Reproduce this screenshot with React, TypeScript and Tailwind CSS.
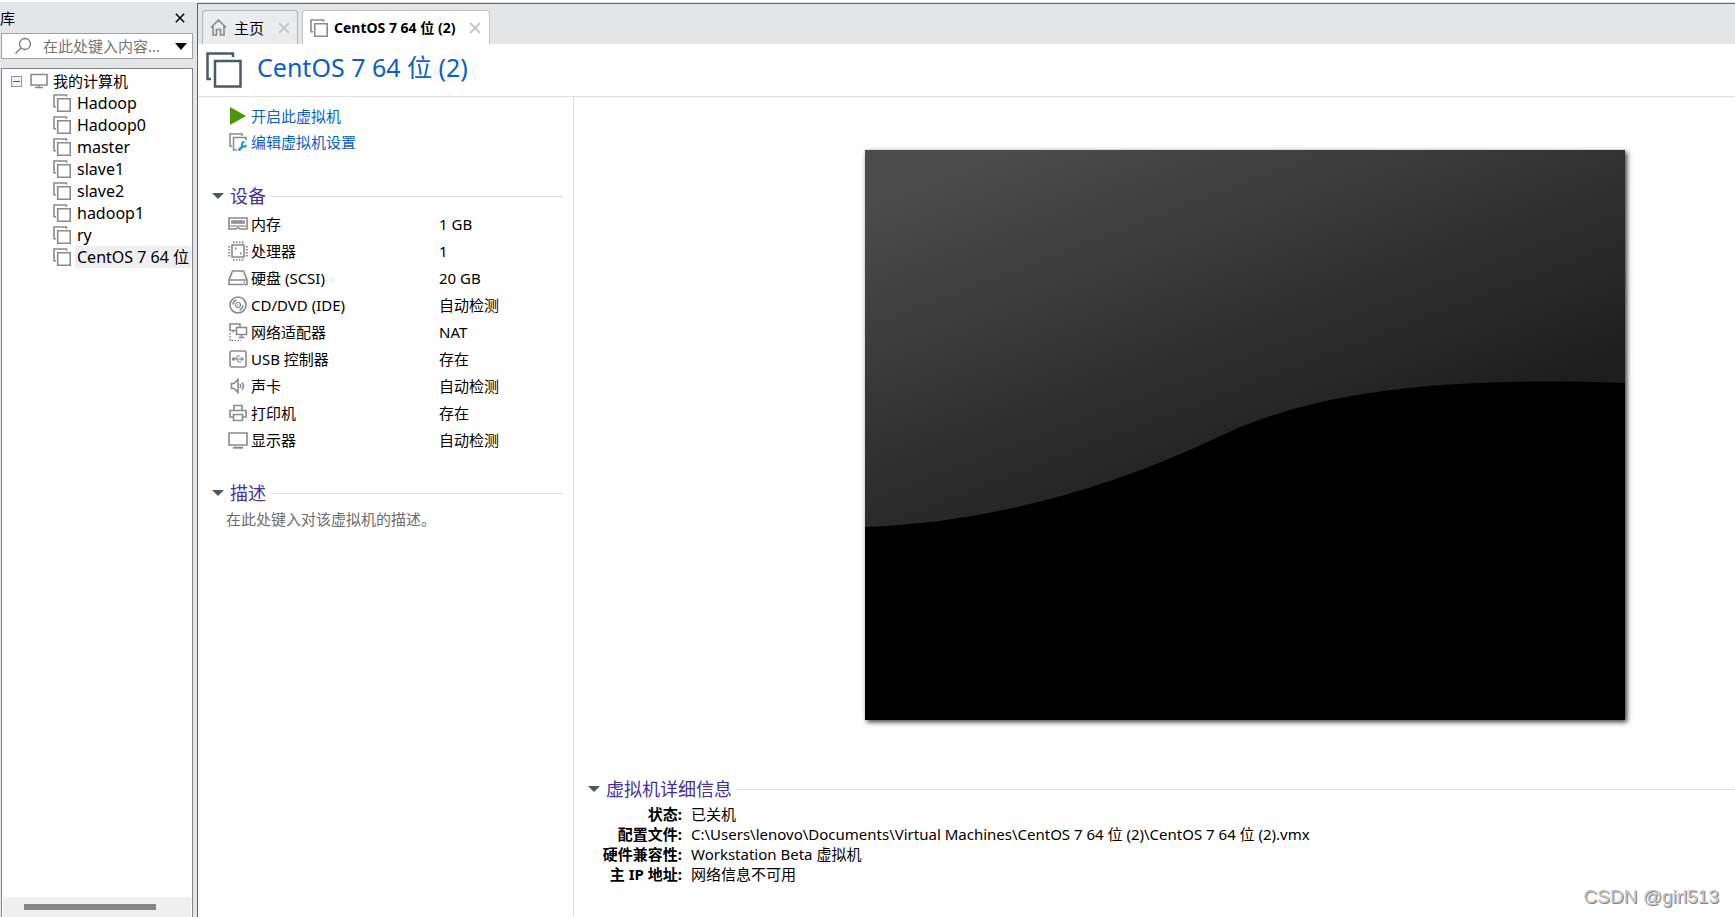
import type { ReactNode } from "react";

type IconProps = { className?: string };

function VmIcon({ className = "text-[#8a8a8a]" }: IconProps) {
  return (
    <svg width="18" height="18" viewBox="0 0 18 18" fill="none" stroke="currentColor" strokeWidth="1.6" className={`shrink-0 ${className}`}>
      <path d="M3 12.800H1V1h12.500v1.800" />
      <path d="M4.700 4.700h12.500v12.500H4.700z" />
    </svg>
  );
}

function MonitorIcon({ className = "" }: IconProps) {
  return (
    <svg width="18" height="16" viewBox="0 0 18 16" fill="none" stroke="#8a8a8a" strokeWidth="1.6" className={`shrink-0 ${className}`}>
      <path d="M1 1.500h16v10.500H1z" />
      <path d="M5 14.500h8M9 12v2" />
    </svg>
  );
}

function CloseIcon({ className = "" }: IconProps) {
  return (
    <svg width="12" height="12" viewBox="0 0 12 12" fill="none" stroke="currentColor" strokeWidth="1.8" className={className}>
      <path d="M1 1l10 10M11 1L1 11" />
    </svg>
  );
}

const deviceIcons: Record<string, ReactNode> = {
  memory: (
    <>
      <path d="M1 4h18v11H12l-1-1H9l-1 1H1z" />
      <path d="M4 7h3v2H4zM8.500 7h3v2h-3zM13 7h3v2h-3z" />
      <path d="M2 12h16" strokeWidth="1.200" />
    </>
  ),
  cpu: (
    <>
      <path d="M4 4h12v12H4z" />
      <path d="M5 1.200h11M5 18.800h11M1.200 5v11M18.800 5v11" strokeWidth="2" strokeDasharray="1.500 1.500" />
      <path d="M7 7.500h1.500M12 12.500h1.500" strokeWidth="1.800" />
    </>
  ),
  disk: (
    <>
      <path d="M4.500 3h11L19 12v4.500H1V12z" />
      <path d="M1 12h18M15.500 14.300H17" />
    </>
  ),
  disc: (
    <>
      <circle cx="10" cy="10" r="8" />
      <circle cx="10" cy="10" r="2.500" strokeWidth="1.200" />
      <path d="M10 9.500v1M5 9.500A5 5 0 0 1 8.500 5M15 10.500a5 5 0 0 1-3.500 4.500" />
    </>
  ),
  network: (
    <>
      <path d="M8 8.500H2V2h10v3" />
      <path d="M8.500 5.500h10v7h-10zM13.500 12.500v3M10.500 15.500h6M5 8.500v2" />
      <path d="M2 11v7.500h11" strokeDasharray="1.500 1.500" />
    </>
  ),
  usb: (
    <>
      <rect x="2" y="2" width="16" height="16" rx="2" />
      <path d="M5 10h9M7.500 10l2-3H12M8.500 10l2 3H13" strokeWidth="1.200" />
      <path d="M13 8.300l3 1.700-3 1.700z" fill="#8a8a8a" strokeWidth="0.500" />
      <circle cx="5.500" cy="10" r="1" />
    </>
  ),
  sound: (
    <>
      <path d="M3.500 7.500H6l4-4v13l-4-4H3.500z" />
      <path d="M12 8q1.500 2 0 4M14 6.500q3 3.500 0 7" />
    </>
  ),
  printer: (
    <>
      <path d="M6 7V2.500h8V7M5 14H2V7.500h16V14h-3" />
      <path d="M5.500 11.500h9v6h-9z" />
    </>
  ),
  display: (
    <>
      <path d="M1 3h18v12H1z" />
      <path d="M5 17.700h10" strokeWidth="2" />
    </>
  ),
};

const machines = ["Hadoop", "Hadoop0", "master", "slave1", "slave2", "hadoop1", "ry", "CentOS 7 64 位"];
const selectedMachine = "CentOS 7 64 位";

const devices = [
  { icon: "memory", name: "内存", value: "1 GB" },
  { icon: "cpu", name: "处理器", value: "1" },
  { icon: "disk", name: "硬盘 (SCSI)", value: "20 GB" },
  { icon: "disc", name: "CD/DVD (IDE)", value: "自动检测" },
  { icon: "network", name: "网络适配器", value: "NAT" },
  { icon: "usb", name: "USB 控制器", value: "存在" },
  { icon: "sound", name: "声卡", value: "自动检测" },
  { icon: "printer", name: "打印机", value: "存在" },
  { icon: "display", name: "显示器", value: "自动检测" },
];

const details = [
  { label: "状态:", value: "已关机" },
  { label: "配置文件:", value: "C:\\Users\\lenovo\\Documents\\Virtual Machines\\CentOS 7 64 位 (2)\\CentOS 7 64 位 (2).vmx" },
  { label: "硬件兼容性:", value: "Workstation Beta 虚拟机" },
  { label: "主 IP 地址:", value: "网络信息不可用" },
];

function SectionHeader({ title }: { title: string }) {
  return (
    <h2 className="flex h-6 items-center text-lg leading-6 text-[#45309f]">
      <button type="button" className="flex items-center gap-1.5">
        <svg width="12" height="6" viewBox="0 0 12 6" className="shrink-0">
          <path d="M0 0h12L6 6z" fill="#465a69" />
        </svg>
        {title}
      </button>
      <span className="ml-1 h-px flex-1 bg-[#dedfe0]" />
    </h2>
  );
}

function Sidebar() {
  return (
    <aside className="flex w-[197px] shrink-0 flex-col pr-1">
      <div className="flex h-[31px] items-center justify-between pr-2">
        <h2>库</h2>
        <button type="button" aria-label="关闭库">
          <CloseIcon className="size-[10px]" />
        </button>
      </div>
      <div className="ml-px flex h-[26px] shrink-0 items-center border border-[#a0a3a6] bg-white pr-[5px] pl-3">
        <svg width="18" height="18" viewBox="0 0 18 18" fill="none" stroke="#777" strokeWidth="1.3" className="shrink-0">
          <circle cx="11" cy="7" r="5.500" />
          <path d="M7 11l-5.500 5.500" />
        </svg>
        <input
          type="text"
          aria-label="搜索"
          placeholder="在此处键入内容..."
          className="ml-[11px] min-w-0 flex-1 outline-none placeholder:text-[#747474]"
        />
        <button type="button" aria-label="搜索选项">
          <svg width="12" height="7" viewBox="0 0 12 7">
            <path d="M0 0h12L6 7z" />
          </svg>
        </button>
      </div>
      <div className="mt-[9px] ml-px flex flex-1 flex-col overflow-hidden border border-b-0 border-[#828790] bg-white">
        <div className="mt-px flex h-[22px] items-center pl-[9px]">
          <button type="button" aria-label="折叠" className="flex size-[11px] items-center justify-center border border-[#959595] bg-[#f4f4f4]">
            <span className="h-px w-[7px] bg-[#3c56a6]" />
          </button>
          <MonitorIcon className="ml-2" />
          <span className="ml-[5px]">我的计算机</span>
        </div>
        <ul>
          {machines.map((name) => (
            <li key={name} className="flex h-[22px] items-center pr-px pl-[51px]">
              <VmIcon />
              <button
                type="button"
                className={`ml-1 h-[22px] pl-0.5 text-left text-base leading-[22px] whitespace-nowrap ${name === selectedMachine ? "flex-1 bg-[#efefef]" : ""}`}
              >
                {name}
              </button>
            </li>
          ))}
        </ul>
        <div className="mx-px mt-auto flex h-5 items-center bg-[#efefef]">
          <div className="ml-[21px] h-1.5 w-[132px] bg-[#868686]" />
        </div>
      </div>
    </aside>
  );
}

function TabBar() {
  return (
    <div className="flex h-10 items-end gap-1 pl-1" role="tablist">
      <div className="flex h-[34px] w-24 items-center rounded-t border border-b-0 border-[#b0b2b4] bg-[#ebecee] pl-[7px]">
        <button type="button" role="tab" aria-selected="false" className="flex items-center gap-[7px]">
          <svg width="17" height="17" viewBox="0 0 17 17" fill="none" stroke="#8a8a8a" strokeWidth="1.600">
            <path d="M1 8.500L8.500 1 16 8.500M3 7v9h3.500v-5.500h4V16H14V7" />
          </svg>
          主页
        </button>
        <button type="button" aria-label="关闭主页" className="ml-3.5 text-[#c6c6c6]">
          <CloseIcon />
        </button>
      </div>
      <div className="flex h-[34px] items-center rounded-t border border-b-0 border-[#c0c2c4] bg-white pr-2 pl-[7px]">
        <button type="button" role="tab" aria-selected="true" className="flex items-center gap-1.5 text-sm font-bold">
          <VmIcon />
          CentOS 7 64 位 (2)
        </button>
        <button type="button" aria-label="关闭标签页" className="ml-3.5 text-[#c6c6c6]">
          <CloseIcon />
        </button>
      </div>
    </div>
  );
}

function Preview() {
  return (
    <svg viewBox="0 0 760 570" className="w-full max-w-[760px] shadow-[2px_2px_5px_rgba(0,0,0,0.8)]">
      <defs>
        <linearGradient id="glow" gradientUnits="userSpaceOnUse" x1="100" y1="20" x2="245" y2="400">
          <stop offset="0" stopColor="#4b4b4b" />
          <stop offset="1" stopColor="#1e1e1e" />
        </linearGradient>
      </defs>
      <path d="M0 0h760v570H0z" fill="url(#glow)" />
      <path d="M0 377C120 373 240 340 347 290C440 244 560 226 760 233V570H0z" fill="#000" />
    </svg>
  );
}

export default function App() {
  return (
    <div className="flex min-h-screen border-t-2 border-white bg-[#e4e5e7] font-['Noto_Sans','Noto_Sans_CJK_SC',sans-serif] text-[15px] leading-5 text-black">
      <Sidebar />
      <main className="mt-px flex min-w-0 flex-1 flex-col border-t border-l border-[#606468]">
        <TabBar />
        <header className="flex h-[53px] items-center gap-[15px] border-b border-[#dedfe0] bg-white pl-2">
          <svg width="36" height="36" viewBox="0 0 36 36" fill="none" stroke="#465a69" strokeWidth="2.500" className="shrink-0">
            <path d="M5 27H1.500V1.500H27V5" />
            <path d="M9 9h25.500v25.500H9z" />
          </svg>
          <h1 className="pb-1.5 text-[25px] leading-8 text-[#0a5fcd]">CentOS 7 64 位 (2)</h1>
        </header>
        <div className="flex flex-1 bg-white">
          <section className="w-[376px] shrink-0 border-r border-[#dedfe0] pt-[6px] pr-2.5 pl-[14px]">
            <div className="flex flex-col pl-[17px] text-[#0a5fcd]">
              <a href="#start" className="flex h-[26px] items-center gap-1">
                <svg width="18" height="18" viewBox="0 0 18 18">
                  <path d="M1 0l16 9-16 9z" fill="#48960c" />
                </svg>
                开启此虚拟机
              </a>
              <a href="#settings" className="flex h-[26px] items-center gap-1">
                <svg width="18" height="18" viewBox="0 0 18 18" fill="none" stroke="#8a8a8a" strokeWidth="1.500">
                  <path d="M3 13H1V1h12v2M8 17H4.500V4.500H17V7" />
                  <path d="M9.500 17.500l5-5" stroke="#00a5cf" strokeWidth="2.500" />
                  <path d="M15.500 9a2.300 2.300 0 1 0 2 3" stroke="#00a5cf" strokeWidth="2" />
                </svg>
                编辑虚拟机设置
              </a>
            </div>
            <div className="mt-[29px]">
              <SectionHeader title="设备" />
              <table className="mt-0.5 ml-4 w-[calc(100%-16px)] table-fixed">
                <tbody>
                  {devices.map((device) => (
                    <tr key={device.icon} className="h-[27px]">
                      <th scope="row" className="w-[211px] p-0 text-left font-normal">
                        <span className="flex items-center gap-[3px]">
                          <svg width="20" height="20" viewBox="0 0 20 20" fill="none" stroke="#8a8a8a" strokeWidth="1.600">
                            {deviceIcons[device.icon]}
                          </svg>
                          {device.name}
                        </span>
                      </th>
                      <td className="p-0">{device.value}</td>
                    </tr>
                  ))}
                </tbody>
              </table>
            </div>
            <div className="mt-7">
              <SectionHeader title="描述" />
              <p className="mt-1 pl-[14px] text-[#6d6d6d]">在此处键入对该虚拟机的描述。</p>
            </div>
          </section>
          <section className="flex min-w-0 flex-1 flex-col pl-[14px]">
            <div className="flex justify-center pt-[53px] pr-[110px] pl-[277px]">
              <Preview />
            </div>
            <div className="mt-[57px]">
              <SectionHeader title="虚拟机详细信息" />
              <dl className="mt-[3px] grid grid-cols-[94px_1fr] gap-x-[9px]">
                {details.map((row) => (
                  <div key={row.label} className="contents">
                    <dt className="text-right font-bold">{row.label}</dt>
                    <dd>{row.value}</dd>
                  </div>
                ))}
              </dl>
            </div>
            <p className="mt-auto pr-4 pb-2 text-right font-['Liberation_Sans',sans-serif] text-[19px] leading-6 text-[#c4c4c4] [text-shadow:1px_1px_0_#858585]">
              CSDN @girl513
            </p>
          </section>
        </div>
      </main>
    </div>
  );
}
